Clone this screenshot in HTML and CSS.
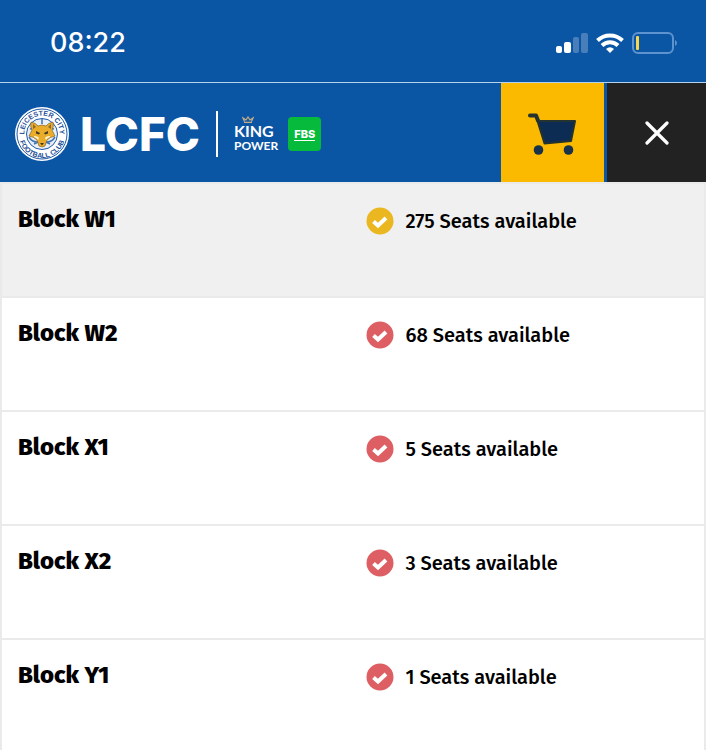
FILE: index.html
```
<!DOCTYPE html>
<html lang="en">
<head>
    <meta charset="utf-8">
    <meta name="viewport" content="width=device-width, initial-scale=1">
    <title>LCFC Tickets</title>
    <link rel="stylesheet" href="styles.css">
</head>
<body>
    <div class="status-bar">
        <span class="time">08:22</span>
        <div class="status-icons">
            <svg width="32" height="20" viewBox="0 0 32 20" fill="#fff">
                <rect x="0" y="13" width="6" height="7" rx="2"/>
                <rect x="8" y="9" width="7" height="11" rx="2"/>
                <rect x="17" y="4" width="6" height="16" rx="2" opacity="0.25"/>
                <rect x="25" y="0" width="7" height="20" rx="2" opacity="0.25"/>
            </svg>
            <svg width="28" height="20" viewBox="0 0 28 20" fill="none" stroke="#fff" stroke-width="4">
                <path d="M1.5 7.5a18 18 0 0 1 25 0"/>
                <path d="M6 12.5a11.5 11.5 0 0 1 16 0"/>
                <path d="M14 20l-4-4q4-3.400 8 0z" fill="#fff" stroke="none"/>
            </svg>
            <svg width="46" height="22" viewBox="0 0 46 22">
                <rect x="1" y="1" width="40" height="20" rx="5" fill="none" stroke="#5d93cf" stroke-width="2"/>
                <rect x="4" y="4" width="3" height="14" rx="1" fill="#f5d84e"/>
                <path d="M43 8q2 1 2 3t-2 3z" fill="#5d93cf"/>
            </svg>
        </div>
    </div>

    <header class="header">
        <a class="brand" href="#" aria-label="LCFC home">
            <svg class="crest" width="56" height="56" viewBox="0 0 56 56">
                <circle cx="28" cy="28" r="27" fill="#fff"/>
                <circle cx="28" cy="28" r="25" fill="none" stroke="#1f5aa8" stroke-width="1"/>
                <circle cx="28" cy="28" r="15.500" fill="#e8eff7" stroke="#1f5aa8" stroke-width="1"/>
                <path id="crest-top" d="M10.500 30a17.700 17.700 0 1 1 35 0" fill="none"/>
                <path id="crest-bottom" d="M5 29a23 23 0 0 0 46 0" fill="none"/>
                <text class="crest-text"><textPath href="#crest-top" startOffset="50%">LEICESTER CITY</textPath></text>
                <text class="crest-text"><textPath href="#crest-bottom" startOffset="50%">FOOTBALL CLUB</textPath></text>
                <g fill="none" stroke="#3f71b5" stroke-width="1.500">
                    <path d="M16 23q4-1 5 5M40 23q-4-1-5 5M15 31q3 5 8 5M41 31q-3 5-8 5M20 38l4-2M36 38l-4-2M28 13v5"/>
                </g>
                <path d="M17 16q5 1 7 4q4-2 8 0q2-3 7-4q1 5-1 8l3 6q-5 1-8 4l-2 6q-3 2-6 0l-2-6q-3-3-8-4l3-6q-2-3-1-8z" fill="#e9ad2b" stroke="#705527" stroke-width="0.600"/>
                <path d="M19 18l3 3-3 2zM37 18l-3 3 3 2z" fill="#8c6a30"/>
                <path d="M20 30q4 0 5 2l-1 2q-1-2-4-3zM36 30q-4 0-5 2l1 2q1-2 4-3z" fill="#fff4d0"/>
                <path d="M22 25l4 2-1 1.500-3-1zM34 25l-4 2 1 1.500 3-1zM26 37h4l-2 2.500z" fill="#423927"/>
            </svg>
            <span class="club">LCFC</span>
            <span class="divider"></span>
            <span class="sponsor">
                <svg class="crown" width="12" height="7" viewBox="0 0 12 7" fill="none" stroke="#c5ad87" stroke-width="1.200">
                    <path d="M2 6.300h8M2.500 5.500L1 2l3 2 2-3 2 3 3-2-1.500 3.500"/>
                </svg>
                <span class="sponsor-king">KING</span>
                <span class="sponsor-power">POWER</span>
            </span>
            <span class="partner"><span class="partner-name">FBS</span></span>
        </a>
        <button class="cart" type="button" aria-label="Basket">
            <svg width="50" height="42" viewBox="0 0 50 42">
                <path d="M2 2.500h6l2 5" fill="none" stroke="#24332f" stroke-width="4" stroke-linecap="round" stroke-linejoin="round"/>
                <path d="M9.500 8h37.500l-4 20-26.500 2.500z" fill="#0d2c54" stroke="#24332f" stroke-width="2" stroke-linejoin="round"/>
                <circle cx="10.500" cy="37" r="4.800" fill="#17324a"/>
                <circle cx="40.500" cy="37" r="4.800" fill="#17324a"/>
            </svg>
        </button>
        <button class="close" type="button" aria-label="Close">
            <svg width="24" height="24" viewBox="0 0 24 24" fill="none" stroke="#fff" stroke-width="3.200" stroke-linecap="round">
                <path d="M2 2l20 20M22 2L2 22"/>
            </svg>
        </button>
    </header>

    <main class="blocks">
        <div class="block selected">
            <h2>Block W1</h2>
            <p class="seats">
                <svg class="tick" width="28" height="28" viewBox="0 0 28 28"><circle cx="14" cy="14" r="13.500"/><path d="M7.500 14.500l4.500 4 8-7.500"/></svg>
                275 Seats available
            </p>
        </div>
        <div class="block">
            <h2>Block W2</h2>
            <p class="seats">
                <svg class="tick" width="28" height="28" viewBox="0 0 28 28"><circle cx="14" cy="14" r="13.500"/><path d="M7.500 14.500l4.500 4 8-7.500"/></svg>
                68 Seats available
            </p>
        </div>
        <div class="block">
            <h2>Block X1</h2>
            <p class="seats">
                <svg class="tick" width="28" height="28" viewBox="0 0 28 28"><circle cx="14" cy="14" r="13.500"/><path d="M7.500 14.500l4.500 4 8-7.500"/></svg>
                5 Seats available
            </p>
        </div>
        <div class="block">
            <h2>Block X2</h2>
            <p class="seats">
                <svg class="tick" width="28" height="28" viewBox="0 0 28 28"><circle cx="14" cy="14" r="13.500"/><path d="M7.500 14.500l4.500 4 8-7.500"/></svg>
                3 Seats available
            </p>
        </div>
        <div class="block">
            <h2>Block Y1</h2>
            <p class="seats">
                <svg class="tick" width="28" height="28" viewBox="0 0 28 28"><circle cx="14" cy="14" r="13.500"/><path d="M7.500 14.500l4.500 4 8-7.500"/></svg>
                1 Seats available
            </p>
        </div>
    </main>
</body>
</html>
```
FILE: styles.css
```
* {
    margin: 0;
    padding: 0;
    box-sizing: border-box;
}

:root {
    --club-blue: #0b55a5;
    --cart-yellow: #fbba00;
    --dark: #222222;
    --line: #eaeaea;
}

body {
    display: flex;
    flex-direction: column;
    height: 100vh;
    overflow: hidden;
    font-family: 'Fira Sans', 'Noto Sans', sans-serif;
    color: #000;
    background-color: #fff;
}

svg {
    display: block;
    flex-shrink: 0;
}

.status-bar {
    display: flex;
    justify-content: space-between;
    align-items: center;
    padding: 25px 28px 21px 50px;
    background-color: var(--club-blue);
    border-bottom: 1px solid #b5d3ee;
    color: #fff;
}

.time {
    font-family: 'Inter', sans-serif;
    font-size: 27px;
    font-weight: 500;
    line-height: 36px;
}

.status-icons {
    display: flex;
    align-items: center;
    gap: 8px;
}

.header {
    display: flex;
    height: 99px;
    flex-shrink: 0;
    background-color: var(--club-blue);
}

.brand {
    display: flex;
    flex: 1;
    align-items: center;
    padding-left: 14px;
    padding-top: 3px;
    color: #fff;
    text-decoration: none;
}

.crest-text {
    font-family: 'Liberation Sans', sans-serif;
    font-size: 7px;
    font-weight: bold;
    fill: #1f4f96;
    text-anchor: middle;
}

.club {
    margin-left: 10px;
    font-family: 'Inter', sans-serif;
    font-size: 46px;
    font-weight: 800;
    line-height: 48px;
}

.divider {
    width: 2px;
    height: 46px;
    margin: 0 16px;
    background-color: #fff;
}

.sponsor {
    display: flex;
    flex-direction: column;
    font-family: 'Lato', sans-serif;
    font-weight: bold;
}

.crown {
    margin-left: 8px;
}

.sponsor-king {
    font-size: 16px;
    line-height: 16px;
}

.sponsor-power {
    font-size: 12px;
    line-height: 13px;
}

.partner {
    display: flex;
    align-items: center;
    justify-content: center;
    width: 33px;
    height: 34px;
    margin-left: 10px;
    border-radius: 4px;
    background-color: #06ba3c;
}

.partner-name {
    border-bottom: 1px solid #fff;
    font-family: 'Inter', sans-serif;
    font-size: 11px;
    font-weight: 800;
    line-height: 12px;
}

.cart,
.close {
    display: flex;
    align-items: center;
    justify-content: center;
    border: none;
    cursor: pointer;
}

.cart {
    width: 103px;
    margin-right: 3px;
    padding-top: 2px;
    background-color: var(--cart-yellow);
}

.close {
    width: 99px;
    background-color: var(--dark);
}

.blocks {
    flex: 1;
    overflow: hidden;
    border: 2px solid var(--line);
    border-bottom: none;
}

.block {
    display: grid;
    grid-template-columns: 13fr 12fr;
    align-items: start;
    height: 114px;
    padding: 23px 16px;
    border-bottom: 2px solid var(--line);
}

.block.selected {
    background-color: #f0f0f0;
}

.block h2 {
    font-size: 24px;
    font-weight: 800;
    line-height: 24px;
}

.seats {
    display: flex;
    align-items: center;
    gap: 11px;
    font-size: 20px;
    font-weight: 500;
    line-height: 28px;
}

.tick circle {
    fill: #dd5f63;
}

.tick path {
    fill: none;
    stroke: #fff;
    stroke-width: 4;
}

.selected .tick circle {
    fill: #ebb720;
}
```
